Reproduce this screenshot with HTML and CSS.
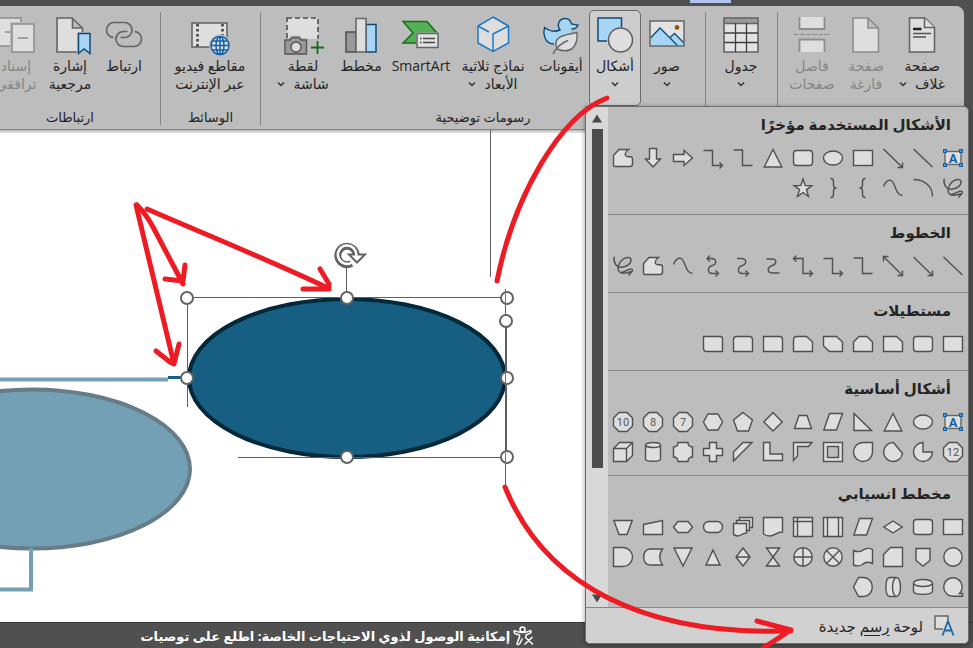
FILE: index.html
```html
<!DOCTYPE html>
<html lang="ar" dir="rtl">
<head>
<meta charset="utf-8">
<title>إدراج أشكال</title>
<link rel="stylesheet" href="styles.css">
</head>
<body>
<svg class="defs" aria-hidden="true">
  <symbol id="chev" viewBox="0 0 8 6"><path d="M1 1.5L4 4.5L7 1.5" fill="none" stroke="#333" stroke-width="1.5"/></symbol>
  <symbol id="textbox" viewBox="0 0 22 22"><rect x="3" y="4.5" width="16" height="13" stroke="#666"/><g fill="#4d9ad6" stroke="#0f5fa8" stroke-width="1"><rect x="1.5" y="2.5" width="3" height="3"/><rect x="17.500" y="2.500" width="3" height="3"/><rect x="1.5" y="16.500" width="3" height="3"/><rect x="17.500" y="16.500" width="3" height="3"/></g><text x="11" y="15.500" class="tb-letter">A</text></symbol>
  <symbol id="line" viewBox="0 0 22 22"><path d="M1.500 2L20.500 20"/></symbol>
  <symbol id="arrow" viewBox="0 0 22 22"><path fill="none" d="M1.500 2L20 20M20.500 15.500V20.500H15.500"/></symbol>
  <symbol id="arrow2" viewBox="0 0 22 22"><path fill="none" d="M2 2L20 20M20.500 15.500V20.500H15.500M1.500 6.500V1.500H6.500"/></symbol>
  <symbol id="rect" viewBox="0 0 22 22"><rect x="1.500" y="3.500" width="19" height="15"/></symbol>
  <symbol id="rrect" viewBox="0 0 22 22"><rect x="1.500" y="3.500" width="19" height="15" rx="3"/></symbol>
  <symbol id="ellipse" viewBox="0 0 22 22"><ellipse cx="11" cy="11" rx="9.500" ry="7"/></symbol>
  <symbol id="tri" viewBox="0 0 22 22"><path d="M11 2.500L19.800 20H2.200Z"/></symbol>
  <symbol id="elbow" viewBox="0 0 22 22"><path fill="none" d="M1.500 3H10.500V18.500H20.500"/></symbol>
  <symbol id="elbow1" viewBox="0 0 22 22"><path fill="none" d="M1.500 3.500H10.500V18.500H20M17.500 15.500L20.500 18.500L17.500 21.500"/></symbol>
  <symbol id="elbow2" viewBox="0 0 22 22"><path fill="none" d="M2 3.500H11V18.500H20M17.500 15.500L20.500 18.500L17.500 21.500M4.500 .5L1.500 3.500L4.500 6.500"/></symbol>
  <symbol id="curve" viewBox="0 0 22 22"><path fill="none" d="M4.500 4H10C15.500 4 14.500 9 10.500 10.500C4.500 12 5 18 10.500 18H17.500"/></symbol>
  <symbol id="curve1" viewBox="0 0 22 22"><path fill="none" d="M5 3.500H9C15 3.500 15 9 10.500 10.500C5 12 5 18.500 10.500 18.500H15M13.500 15.500L16.500 18.500L13.500 21.500"/></symbol>
  <symbol id="curve2" viewBox="0 0 22 22"><path fill="none" d="M6 3.500H9C15 3.500 15 9 10.500 10.500C5 12 5 18.500 10.500 18.500H15M13.500 15.500L16.500 18.500L13.500 21.500M8 .5L5 3.500L8 6.500"/></symbol>
  <symbol id="wave" viewBox="0 0 22 22"><path fill="none" d="M1.500 9.500C4.500 2 9.500 .5 12.500 8.500C15 15 16.500 18.500 20.500 18.500"/></symbol>
  <symbol id="freeform" viewBox="0 0 22 22"><path d="M1.500 18V8.500L7 2.500H16.500C12.500 5 12 9.500 16 9.800H18.500C20 9.800 20.500 11 20.500 12.500V17C20.500 19 19.500 19.500 18 19.500H3C2 19.500 1.500 19 1.500 18Z"/></symbol>
  <symbol id="scribble" viewBox="0 0 22 22"><path fill="none" d="M2.300 1.700C1 7 4 12.500 9.700 12.300C15 12 19.500 8 19 4.500C18.500 1.500 13 2 9.500 5.500C6 9 5 15 7.500 17C10 18.500 14 15.500 17.500 14.300C20.500 13.500 21.500 15.500 19.500 17L16.500 20.500M8 17.500C11 19 14 18.500 20 16.500"/></symbol>
  <symbol id="rarrow" viewBox="0 0 22 22"><path d="M1.500 7.500H12V3.500L20.500 11L12 18.500V14.500H1.500Z"/></symbol>
  <symbol id="darrow" viewBox="0 0 22 22"><path d="M7.500 1.500H14.500V12H18.500L11 20L3.500 12H7.500Z"/></symbol>
  <symbol id="arc" viewBox="0 0 22 22"><path fill="none" d="M1.500 2.500C12 2.500 20.500 9 20.500 19.500"/></symbol>
  <symbol id="lbrace" viewBox="0 0 22 22"><path fill="none" d="M13.500 1.500C11 1.500 10.500 3 10.500 5V8C10.500 10 9.500 11 7.500 11C9.500 11 10.500 12 10.500 14V17C10.500 19.500 11 20.500 13.500 20.500"/></symbol>
  <symbol id="rbrace" viewBox="0 0 22 22"><path fill="none" d="M8.500 1.500C11 1.500 11.500 3 11.500 5V8C11.500 10 12.500 11 14.500 11C12.500 11 11.500 12 11.500 14V17C11.500 19.500 11 20.500 8.500 20.500"/></symbol>
  <symbol id="star" viewBox="0 0 22 22"><path d="M11 2L13.200 8.600H19.800L14.500 12.600L16.500 19.500L11 15.500L5.500 19.500L7.500 12.600L2.200 8.600H8.800Z"/></symbol>
  <symbol id="snip1" viewBox="0 0 22 22"><path d="M1.500 3.500H14.500L20.500 9V18.500H1.500Z"/></symbol>
  <symbol id="snip2" viewBox="0 0 22 22"><path d="M7 3.500H15L20.500 9V18.500H1.500V9Z"/></symbol>
  <symbol id="snipd" viewBox="0 0 22 22"><path d="M1.500 3.500H14.500L20.500 9V18.500H7.500L1.500 13Z"/></symbol>
  <symbol id="snipr" viewBox="0 0 22 22"><path d="M5 3.500H14.500L20.500 9V18.500H1.500V7Q1.500 3.500 5 3.500Z"/></symbol>
  <symbol id="round1" viewBox="0 0 22 22"><path d="M1.500 3.500H17.500Q20.500 3.500 20.500 6.500V18.500H1.500Z"/></symbol>
  <symbol id="round2" viewBox="0 0 22 22"><path d="M5 3.500H17Q20.500 3.500 20.500 7V18.500H1.500V7Q1.500 3.500 5 3.500Z"/></symbol>
  <symbol id="roundd" viewBox="0 0 22 22"><path d="M4 3.500H18Q20.500 3.500 20.500 6V18.500H4.500Q1.500 18.500 1.500 15.500V3.500Z"/></symbol>
  <symbol id="rtri" viewBox="0 0 22 22"><path d="M2 2.500V19.500H19.500Z"/></symbol>
  <symbol id="para" viewBox="0 0 22 22"><path d="M7.500 2.500H20.500L14.500 19H1.800Z"/></symbol>
  <symbol id="trap" viewBox="0 0 22 22"><path d="M7 4.500H15L19.500 17.500H2.500Z"/></symbol>
  <symbol id="diamond" viewBox="0 0 22 22"><path d="M11 1.500L20.200 11L11 20L1.800 11Z"/></symbol>
  <symbol id="penta" viewBox="0 0 22 22"><path d="M11 1.500L20.500 9L16.500 20H5.500L1.500 9Z"/></symbol>
  <symbol id="hexa" viewBox="0 0 22 22"><path d="M6 3H16L20.500 11L16 19H6L1.500 11Z"/></symbol>
  <symbol id="octa" viewBox="0 0 22 22"><path d="M7 1.500H15L20.500 7V15L15 20.500H7L1.500 15V7Z"/></symbol>
  <symbol id="pie" viewBox="0 0 22 22"><path d="M11 1.500V11H20.500A9.500 9.500 0 1 1 11 1.500Z"/></symbol>
  <symbol id="chord" viewBox="0 0 22 22"><path d="M11.500 1.500L20.500 12.500A9.500 9.500 0 1 1 11.500 1.500Z"/></symbol>
  <symbol id="tear" viewBox="0 0 22 22"><path d="M11 1.500H20.500V11A9.500 9.500 0 1 1 11 1.500Z"/></symbol>
  <symbol id="frame" viewBox="0 0 22 22"><rect x="1.500" y="1.500" width="19" height="19"/><rect x="5.500" y="5.500" width="11" height="11" fill="#bdbdbd"/></symbol>
  <symbol id="half" viewBox="0 0 22 22"><path d="M1.500 1.500H20L16.500 5.500H5.500V15L1.500 19.500Z"/></symbol>
  <symbol id="lshape" viewBox="0 0 22 22"><path d="M1.500 1.500H8V13H20.500V19.500H1.500Z"/></symbol>
  <symbol id="stripe" viewBox="0 0 22 22"><path d="M11 1.500H20L1.500 20V11Z"/></symbol>
  <symbol id="cross" viewBox="0 0 22 22"><path d="M7.500 1.500H14.500V7.500H20.500V14.500H14.500V20.500H7.500V14.500H1.500V7.500H7.500Z"/></symbol>
  <symbol id="plaque" viewBox="0 0 22 22"><path d="M6 1.500H16Q16 6 20.500 6V16Q16 16 16 20.500H6Q6 16 1.500 16V6Q6 6 6 1.500Z"/></symbol>
  <symbol id="can" viewBox="0 0 22 22"><path d="M3.500 4V18C3.500 21 18.500 21 18.500 18V4"/><ellipse cx="11" cy="4" rx="7.500" ry="2.500"/></symbol>
  <symbol id="cube" viewBox="0 0 22 22"><path d="M1.500 7.500L7.500 1.500H20.500V14.500L14.500 20.500H1.500ZM1.500 7.500H14.500V20.500M14.500 7.500L20.500 1.500"/></symbol>
  <symbol id="decision" viewBox="0 0 22 22"><path d="M11 5L20.200 11L11 17L1.800 11Z"/></symbol>
  <symbol id="predef" viewBox="0 0 22 22"><path d="M1.500 1.500H20.500V20.500H1.500ZM5.500 1.500V20.500M16.500 1.500V20.500"/></symbol>
  <symbol id="internal" viewBox="0 0 22 22"><path d="M1.500 1.500H20.500V20.500H1.500ZM5.500 1.500V20.500M1.500 5.500H20.500"/></symbol>
  <symbol id="doc" viewBox="0 0 22 22"><path d="M1.500 1.500H20.500V16C14 16 13 20 8 20Q4 20 1.500 18Z"/></symbol>
  <symbol id="docs" viewBox="0 0 22 22"><path d="M7.500 1.500H20.500V11.500H7.500Z"/><path d="M4.500 4.500H17.500V14.500H4.500Z"/><path d="M1.500 7.500H14.500V17C10 17 9.500 20 5 20L1.500 18.500Z"/></symbol>
  <symbol id="term" viewBox="0 0 22 22"><rect x="1.500" y="5.500" width="19" height="11" rx="5.500"/></symbol>
  <symbol id="prep" viewBox="0 0 22 22"><path d="M6 5.500H16L20.500 11L16 16.500H6L1.500 11Z"/></symbol>
  <symbol id="minput" viewBox="0 0 22 22"><path d="M1.500 8.500L20.500 4.500V18.500H1.500Z"/></symbol>
  <symbol id="mop" viewBox="0 0 22 22"><path d="M1.800 4.500H20.200L15 18.500H7Z"/></symbol>
  <symbol id="circle" viewBox="0 0 22 22"><circle cx="11" cy="11" r="9.200"/></symbol>
  <symbol id="offpage" viewBox="0 0 22 22"><path d="M4 2.500H18V14.500L11 20L4 14.500Z"/></symbol>
  <symbol id="card" viewBox="0 0 22 22"><path d="M8.500 1.500H20.500V20.500H1.500V8.500Z"/></symbol>
  <symbol id="tape" viewBox="0 0 22 22"><path d="M1.500 4.500C6 6.500 9 6 12 3.500C15 2 18 2 20.500 3.500V17.500C16 15.500 13 16 10.500 18.500C7 20.500 4 20 1.500 19Z"/></symbol>
  <symbol id="sum" viewBox="0 0 22 22"><circle cx="11" cy="11" r="9.200"/><path d="M4.500 4.500L17.500 17.500M17.500 4.500L4.500 17.500"/></symbol>
  <symbol id="or" viewBox="0 0 22 22"><circle cx="11" cy="11" r="9.200"/><path d="M11 2V20M2 11H20"/></symbol>
  <symbol id="collate" viewBox="0 0 22 22"><path d="M4.500 2H17.500L4.500 20H17.500Z"/></symbol>
  <symbol id="sort" viewBox="0 0 22 22"><path d="M11 2L18 11L11 20L4 11ZM4 11H18"/></symbol>
  <symbol id="extract" viewBox="0 0 22 22"><path d="M11 4L18 19H4Z"/></symbol>
  <symbol id="merge" viewBox="0 0 22 22"><path d="M2 2H20L11 20Z"/></symbol>
  <symbol id="stored" viewBox="0 0 22 22"><path d="M8 3H20.500Q15 11 20.500 19H8C-.5 19-.5 3 8 3Z"/></symbol>
  <symbol id="delay" viewBox="0 0 22 22"><path d="M1.500 1.500H11A9.500 9.500 0 0 1 11 20.500H1.500Z"/></symbol>
  <symbol id="seq" viewBox="0 0 22 22"><path d="M11 20.200A9.200 9.200 0 1 1 17.500 17.500H20.500V20.200Z"/></symbol>
  <symbol id="disk" viewBox="0 0 22 22"><path d="M1.500 7V15C1.500 19.500 20.500 19.500 20.500 15V7"/><ellipse cx="11" cy="7" rx="9.500" ry="3.500"/></symbol>
  <symbol id="direct" viewBox="0 0 22 22"><path d="M14 1.500H8C2.500 1.500 2.500 20.500 8 20.500H14"/><ellipse cx="14.500" cy="11" rx="4" ry="9.500"/></symbol>
  <symbol id="display" viewBox="0 0 22 22"><path d="M6.500 1.500H12C23 2.500 23 19.500 12 20.500H6.500L1.500 11Z"/></symbol>
</svg>

<div class="app">
  <header class="titlebar"><span class="tab-mark"></span></header>

  <nav class="ribbon" aria-label="إدراج">
    <section class="group pages">
      <div class="tools">
        <button class="tool w60"><svg class="icon" viewBox="0 0 36 36"><path d="M5.500 1H21L30.500 10.500V35H5.500Z" fill="#dedede" stroke="#636363" stroke-width="1.600"/><path d="M20.500 1V10.500H30.500" fill="#dedede" stroke="#636363" stroke-width="1.600"/><path d="M9 12H17.500" stroke="#222" stroke-width="2.500"/><path d="M9 16.500H27M9 20H22" stroke="#555" stroke-width="1.500"/></svg><span>صفحة</span><span class="with-chev">غلاف <svg class="chev"><use href="#chev"/></svg></span></button>
        <button class="tool w52" disabled><svg class="icon" viewBox="0 0 36 36"><path d="M5 1H20L30.500 11V35H5ZM20 1V11H30.500" fill="#dedede" stroke="#8d8d8d" stroke-width="1.600"/></svg><span>صفحة</span><span>فارغة</span></button>
        <button class="tool w56" disabled><svg class="icon" viewBox="0 0 36 36"><path d="M5.500 0V12H30.500V0M5.500 35V22.500H30.500V35" fill="#dedede" stroke="#8d8d8d" stroke-width="1.800"/><path d="M0 17.500H36" stroke="#8d8d8d" stroke-dasharray="5 1"/></svg><span>فاصل</span><span>صفحات</span></button>
      </div>
    </section>

    <section class="group table-group">
      <div class="tools">
        <button class="tool w52"><svg class="icon" viewBox="0 0 36 36"><rect x="1" y="1" width="34" height="34" fill="#e2e2e2"/><rect x="1" y="1" width="34" height="5" fill="#999"/><path d="M1 1H35V35H1ZM1 6.500H35" fill="none" stroke="#636363" stroke-width="1.600"/><path d="M12.500 6V35M23.500 6V35M1 16H35M1 25.500H35" stroke="#3e3e3e" stroke-width="1.300"/></svg><span>جدول</span><svg class="chev"><use href="#chev"/></svg></button>
      </div>
    </section>

    <section class="group art">
      <div class="tools">
        <button class="tool w52"><svg class="icon" viewBox="0 0 36 36"><rect x="1" y="4" width="34" height="25" fill="#e2e2e2"/><path d="M1.500 21L11 11L28 28.500H1.500Z" fill="#a9d5f5"/><path d="M20.500 21L25.500 16.500L34.500 25.500V28.500H28Z" fill="#a9d5f5"/><path d="M1.500 21L11 11L28.500 28.500M20.500 21L25.500 16.500L34.500 25.500" fill="none" stroke="#0d4a75" stroke-width="1.300"/><rect x="1" y="4" width="34" height="25" fill="none" stroke="#666" stroke-width="1.500"/><circle cx="28" cy="10.500" r="2.400" fill="#9a5500"/></svg><span>صور</span><svg class="chev"><use href="#chev"/></svg></button>
        <button class="tool w52 open" aria-expanded="true"><svg class="icon" viewBox="0 0 36 36"><path d="M1 1H24.500V12A12 12 0 0 0 10 24H1Z" fill="#a9d5f5"/><path d="M10 24H1V1H24.500V10" fill="none" stroke="#0d4a75" stroke-width="1.500"/><circle cx="23.500" cy="23" r="12" fill="#dedede" stroke="#5c5c5c" stroke-width="1.500"/></svg><span>أشكال</span><svg class="chev"><use href="#chev"/></svg></button>
        <button class="tool w56"><svg class="icon" viewBox="0 0 36 36"><path d="M9 27C1 26 0 16 2 10.500C6 14 12 15 18 12C13 7 17 1 22.500 1.500Q27 1.500 28.500 7L35 8C34 11 31 11.500 28.500 12L27 17C20 17 14 19 13 27Z" fill="#a9d5f5"/><path d="M11 27C1 27 0 16 1.500 10.500C6 14 12 15 17 13C13 7 17 1 22.500 1.500Q27 1.500 28.500 7L35 8C34 11 31 12 28.500 12" fill="none" stroke="#0d4a75" stroke-width="1.400"/><path d="M14 32C9 20 20 18 34 15.500C35 28 29 38 14 32Z" fill="#dedede" stroke="#666" stroke-width="1.400"/><path d="M10 37C13 31 18 26 25 23.500" fill="none" stroke="#666" stroke-width="1.400"/></svg><span>أيقونات</span></button>
        <button class="tool w80"><svg class="icon" viewBox="0 0 36 36"><path d="M18 0L33.500 9V26L18 34.500L3 26V9Z" fill="#dedede"/><path d="M18 0L33.500 9V26L18 34.500L3 26V9ZM18 34V17L33.500 9M3 9L14 15" fill="none" stroke="#1c79c7" stroke-width="1.500"/></svg><span>نماذج ثلاثية</span><span class="with-chev">الأبعاد <svg class="chev"><use href="#chev"/></svg></span></button>
        <button class="tool w64"><svg class="icon" viewBox="0 0 36 36"><path d="M0 4.500H24L34 16L24 26H0L10 16Z" fill="#54af57" stroke="#176d1b" stroke-width="1.500"/><rect x="13" y="15.500" width="23" height="16" fill="#bdbdbd"/><rect x="14" y="16.500" width="21" height="14" fill="#e2e2e2" stroke="#666" stroke-width="1.500"/><path d="M20 21.500H32M20 25.500H32M17 21.500H18.500M17 25.500H18.500" stroke="#444" stroke-width="1.300"/></svg><span>SmartArt</span></button>
        <button class="tool w56"><svg class="icon" viewBox="0 0 36 36"><g stroke-width="1.500"><path d="M3 15H13V35H3Z" fill="#999" stroke="#4f4f4f"/><path d="M23 7.500H33V35H23Z" fill="#a9d5f5" stroke="#0d4a75"/><path d="M13 1.500H23V35H13Z" fill="#dedede" stroke="#636363"/></g></svg><span>مخطط</span></button>
        <button class="tool w60"><svg class="icon icon-wide" viewBox="0 0 42 36"><path d="M5 1H36V28H5Z" fill="#dedede" stroke="#4f4f4f" stroke-width="1.600" stroke-dasharray="5 3"/><rect x="21" y="22" width="20" height="14" fill="#bdbdbd"/><path d="M3 23H8L10 20.500H17L19 23H24.500V37H3Z" fill="#999" stroke="#bdbdbd" stroke-width="4"/><path d="M3 23H8L10 20.500H17L19 23H24.500V37H3Z" fill="#999" stroke="#555" stroke-width="1.400"/><circle cx="14" cy="30" r="5" fill="#dedede" stroke="#555" stroke-width="1.400"/><path d="M35.500 24V37M29 30.500H42" stroke="#176d1b" stroke-width="1.800"/></svg><span>لقطة</span><span class="with-chev">شاشة <svg class="chev"><use href="#chev"/></svg></span></button>
      </div>
      <h2 class="caption">رسومات توضيحية</h2>
    </section>

    <section class="group media">
      <div class="tools">
        <button class="tool w76"><svg class="icon icon-wide" viewBox="0 0 42 36"><rect x="3" y="6" width="35" height="24" fill="#dedede" stroke="#666" stroke-width="1.600"/><path d="M8.500 7V30M33.500 7V18" stroke="#444" stroke-width="2.600" stroke-dasharray="2.500 2.500"/><circle cx="31" cy="28.500" r="11" fill="#bdbdbd"/><g fill="none" stroke="#1062a8" stroke-width="1.500"><circle cx="31" cy="28.500" r="9" fill="#dedede"/><ellipse cx="31" cy="28.500" rx="4" ry="9"/><path d="M22 28.500H40M23.500 24H38.500M23.500 33H38.500M31 19.500V37.500"/></g></svg><span>مقاطع فيديو</span><span>عبر الإنترنت</span></button>
      </div>
      <h2 class="caption">الوسائط</h2>
    </section>

    <section class="group links">
      <div class="tools">
        <button class="tool w52"><svg class="icon" viewBox="0 0 36 36"><g fill="none" stroke="#666" stroke-width="1.700"><path d="M7.500 20.500A7.500 7.500 0 0 1 8.500 5.500H18.500A7.500 7.500 0 0 1 18.500 20.500H14.500"/><path d="M28.500 14.500A7.500 7.500 0 0 1 27.500 29.500H17.500A7.500 7.500 0 0 1 17.500 14.500H21.500"/></g></svg><span>ارتباط</span></button>
        <button class="tool w56"><svg class="icon" viewBox="0 0 36 36"><path d="M5 1H20L30.500 11V35H5ZM20.500 1V11H30.500" fill="#dedede" stroke="#636363" stroke-width="1.600"/><path d="M25 15H39V37H25Z" fill="#bdbdbd"/><path d="M26.500 16.500H38V36.500L32 32L26.500 36.500Z" fill="#a9d5f5" stroke="#0d4a75" stroke-width="1.500"/></svg><span>إشارة</span><span>مرجعية</span></button>
        <button class="tool w52" disabled><svg class="icon" viewBox="0 0 36 36"><path d="M0 1H23V29H0ZM7 15H13" fill="#dedede" stroke="#8d8d8d" stroke-width="1.500"/><rect x="12" y="5" width="26" height="32" fill="#bdbdbd"/><path d="M14 7H36V35H14ZM19.500 21H30" fill="#dedede" stroke="#8d8d8d" stroke-width="1.500"/></svg><span>إسناد</span><span>ترافقي</span></button>
      </div>
      <h2 class="caption">ارتباطات</h2>
    </section>
  </nav>

  <main class="workspace">
    <svg class="diagram" aria-label="مخطط">
      <g transform="translate(0 -130)">
        <ellipse cx="32" cy="469" rx="158" ry="79.500" fill="#73a0b5" stroke="#667c87" stroke-width="4"/>
        <path d="M31 548V589.500H0M0 379.500H168" fill="none" stroke="#73a0b5" stroke-width="4"/>
        <path d="M168 377.500H188" stroke="#165f82" stroke-width="3"/>
        <ellipse cx="347" cy="378" rx="158" ry="79" fill="#165f82" stroke="#03283a" stroke-width="4"/>
        <g stroke="#5e5e5e" fill="none"><path d="M187 297.500H507M187.500 297V407M238 457.500H507M490.500 130V277M346.500 267V297M505.500 289V487"/><path d="M506 320V458" stroke-width="2"/></g>
        <g fill="#fff" stroke="#636363" stroke-width="2"><circle cx="187" cy="298" r="6"/><circle cx="347" cy="298" r="6"/><circle cx="507" cy="298" r="6"/><circle cx="506" cy="321" r="6"/><circle cx="187" cy="378" r="6"/><circle cx="507" cy="378" r="6"/><circle cx="347" cy="457" r="6"/><circle cx="507" cy="457" r="6"/></g>
        <path d="M505.500 291V305M505.500 371V385M505.500 450V464" stroke="#777"/>
        <path d="M356.200 255.300A9.200 9.200 0 1 0 351.500 263.500" fill="none" stroke="#636363" stroke-width="7"/>
        <path d="M349 254.500H365L357 262.500Z" fill="#fff" stroke="#636363" stroke-width="2"/>
        <path d="M356.200 256A9.200 9.200 0 1 0 352 262.500" fill="none" stroke="#fff" stroke-width="2.500"/>
      </g>
    </svg>
  </main>

  <footer class="statusbar">
    <button class="status"><svg class="access" viewBox="0 0 22 20"><g fill="none" stroke="#fff" stroke-width="1.500"><circle cx="9.500" cy="3.500" r="2.500"/><path d="M2 4.500C5 7 14 7 17 4.500Q19 5 17.500 7L13 9V11M2 4.500Q0 5.500 2 7.500L6.500 9V11L4 17.500Q4.500 19.500 6.500 18L9.500 12.500M12 11L20 18.500M19.500 11L11.500 18.500"/></g></svg><span>إمكانية الوصول لذوي الاحتياجات الخاصة: اطلع على توصيات</span></button>
  </footer>
</div>

<div class="menu">
  <div class="menu-body">
    <div class="gallery">
      <section class="shapes">
        <h3>الأشكال المستخدمة مؤخرًا</h3>
        <div class="cells">
          <button><svg><use href="#textbox"/></svg></button><button><svg><use href="#line"/></svg></button><button><svg><use href="#arrow"/></svg></button><button><svg><use href="#rect"/></svg></button><button><svg><use href="#ellipse"/></svg></button><button><svg><use href="#rrect"/></svg></button><button><svg><use href="#tri"/></svg></button><button><svg><use href="#elbow"/></svg></button><button><svg><use href="#elbow1"/></svg></button><button><svg><use href="#rarrow"/></svg></button><button><svg><use href="#darrow"/></svg></button><button><svg><use href="#freeform"/></svg></button>
          <button><svg><use href="#scribble"/></svg></button><button><svg><use href="#arc"/></svg></button><button><svg><use href="#wave"/></svg></button><button><svg><use href="#lbrace"/></svg></button><button><svg><use href="#rbrace"/></svg></button><button><svg><use href="#star"/></svg></button>
        </div>
      </section>
      <section class="shapes">
        <h3>الخطوط</h3>
        <div class="cells">
          <button><svg><use href="#line"/></svg></button><button><svg><use href="#arrow"/></svg></button><button><svg><use href="#arrow2"/></svg></button><button><svg><use href="#elbow"/></svg></button><button><svg><use href="#elbow1"/></svg></button><button><svg><use href="#elbow2"/></svg></button><button><svg><use href="#curve"/></svg></button><button><svg><use href="#curve1"/></svg></button><button><svg><use href="#curve2"/></svg></button><button><svg><use href="#wave"/></svg></button><button><svg><use href="#freeform"/></svg></button><button><svg><use href="#scribble"/></svg></button>
        </div>
      </section>
      <section class="shapes">
        <h3>مستطيلات</h3>
        <div class="cells">
          <button><svg><use href="#rect"/></svg></button><button><svg><use href="#rrect"/></svg></button><button><svg><use href="#snip1"/></svg></button><button><svg><use href="#snip2"/></svg></button><button><svg><use href="#snipd"/></svg></button><button><svg><use href="#snipr"/></svg></button><button><svg><use href="#round1"/></svg></button><button><svg><use href="#round2"/></svg></button><button><svg><use href="#roundd"/></svg></button>
        </div>
      </section>
      <section class="shapes tight">
        <h3>أشكال أساسية</h3>
        <div class="cells">
          <button><svg><use href="#textbox"/></svg></button><button><svg><use href="#ellipse"/></svg></button><button><svg><use href="#tri"/></svg></button><button><svg><use href="#rtri"/></svg></button><button><svg><use href="#para"/></svg></button><button><svg><use href="#trap"/></svg></button><button><svg><use href="#diamond"/></svg></button><button><svg><use href="#penta"/></svg></button><button><svg><use href="#hexa"/></svg></button><button><svg><use href="#octa"/><text class="num" x="11" y="15">7</text></svg></button><button><svg><use href="#octa"/><text class="num" x="11" y="15">8</text></svg></button><button><svg><use href="#octa"/><text class="num" x="11" y="15">10</text></svg></button>
          <button><svg><use href="#octa"/><text class="num" x="11" y="15">12</text></svg></button><button><svg><use href="#pie"/></svg></button><button><svg><use href="#chord"/></svg></button><button><svg><use href="#tear"/></svg></button><button><svg><use href="#frame"/></svg></button><button><svg><use href="#half"/></svg></button><button><svg><use href="#lshape"/></svg></button><button><svg><use href="#stripe"/></svg></button><button><svg><use href="#cross"/></svg></button><button><svg><use href="#plaque"/></svg></button><button><svg><use href="#can"/></svg></button><button><svg><use href="#cube"/></svg></button>
        </div>
      </section>
      <section class="shapes last">
        <h3>مخطط انسيابي</h3>
        <div class="cells">
          <button><svg><use href="#rect"/></svg></button><button><svg><use href="#rrect"/></svg></button><button><svg><use href="#decision"/></svg></button><button><svg><use href="#para"/></svg></button><button><svg><use href="#predef"/></svg></button><button><svg><use href="#internal"/></svg></button><button><svg><use href="#doc"/></svg></button><button><svg><use href="#docs"/></svg></button><button><svg><use href="#term"/></svg></button><button><svg><use href="#prep"/></svg></button><button><svg><use href="#minput"/></svg></button><button><svg><use href="#mop"/></svg></button>
          <button><svg><use href="#circle"/></svg></button><button><svg><use href="#offpage"/></svg></button><button><svg><use href="#card"/></svg></button><button><svg><use href="#tape"/></svg></button><button><svg><use href="#sum"/></svg></button><button><svg><use href="#or"/></svg></button><button><svg><use href="#collate"/></svg></button><button><svg><use href="#sort"/></svg></button><button><svg><use href="#extract"/></svg></button><button><svg><use href="#merge"/></svg></button><button><svg><use href="#stored"/></svg></button><button><svg><use href="#delay"/></svg></button>
          <button><svg><use href="#seq"/></svg></button><button><svg><use href="#disk"/></svg></button><button><svg><use href="#direct"/></svg></button><button><svg><use href="#display"/></svg></button>
        </div>
      </section>
    </div>
    <div class="scroll" aria-hidden="true">
      <svg class="scroll-arrow" viewBox="0 0 12 10"><path d="M6 .5L11 8.500H1Z" fill="#484848"/></svg>
      <div class="track"><div class="thumb"></div></div>
      <svg class="scroll-arrow" viewBox="0 0 12 10"><path d="M6 9.500L11 1.500H1Z" fill="#484848"/></svg>
    </div>
  </div>
  <button class="new-canvas"><svg class="canvas-icon" viewBox="0 0 20 22"><path d="M14 5V1H1V14H9" fill="#dedede" stroke="#666" stroke-width="1.500"/><path d="M8.500 20.500L14 6L19.500 20.500M10.500 15.500H17.500" fill="none" stroke="#1a69a8" stroke-width="1.800"/></svg><span>لوحة <u>رسم</u> جديدة</span></button>
</div>

<svg class="ink" aria-hidden="true">
  <g fill="none" stroke="#ed1c24" stroke-width="5" stroke-linecap="round" stroke-linejoin="round">
    <path d="M136 205L174 364M156 351L170 362L174 364L179 344"/>
    <path d="M137 205Q146 214 153 227L183 284M165 279L183 281L185 265"/>
    <path d="M147 209C195 230 260 256 328 288M303 289H329V284L320 269"/>
    <path d="M607 98C560 116 514 196 497 281"/>
    <path d="M505 487C545 586 645 636 791 631M757 621L791 630L763 648"/>
  </g>
</svg>
</body>
</html>
```
FILE: styles.css
```css
* { box-sizing: border-box; }

html, body { height: 100%; }

body {
  margin: 0;
  position: relative;
  overflow: hidden;
  background: #505050;
  color: #242424;
  font: 14px/18px "Open Sans", "Noto Sans", "DejaVu Sans", sans-serif;
}

button {
  margin: 0;
  padding: 0;
  border: 0;
  background: none;
  color: inherit;
  font: inherit;
}

svg { display: block; overflow: visible; }

.defs { position: absolute; width: 0; height: 0; }

.app {
  display: flex;
  flex-direction: column;
  height: 100%;
}

.titlebar {
  display: flex;
  height: 6px;
  padding-right: 242px;
}

.tab-mark {
  width: 41px;
  height: 3px;
  background: #b2c3ee;
}

.ribbon {
  display: flex;
  z-index: 1;
  height: 124px;
  margin-right: 9px;
  padding: 4px 0;
  overflow: hidden;
  background: #bdbdbd;
  border-bottom: 1px solid #858585;
  border-top-right-radius: 8px;
}

.group {
  display: flex;
  flex: none;
  flex-direction: column;
  justify-content: space-between;
  padding: 0 12px;
  border-left: 1px solid #858585;
  margin-top: 2px;
}

.tools { display: flex; margin-top: -2px; }

.pages { width: 187px; }
.table-group { width: 72px; padding: 0 10px; }
.art { width: 445px; }
.media { width: 100px; }
.links { border-left: 0; padding: 0 10px; }

.tool {
  display: flex;
  flex: none;
  flex-direction: column;
  align-items: center;
  height: 96px;
  padding-top: 6px;
  border: 1px solid transparent;
  border-radius: 5px;
  white-space: nowrap;
}

.tool:disabled { color: #868686; }

.tool.open {
  background: #cdcdcd;
  border-color: #6a6a6a;
}

.w52 { width: 52px; }
.w56 { width: 56px; }
.w60 { width: 60px; }
.w64 { width: 64px; }
.w76 { width: 76px; }
.w80 { width: 80px; }

.icon {
  width: 36px;
  height: 36px;
  margin-bottom: 4px;
}

.icon-wide { width: 42px; }

.chev {
  width: 8px;
  height: 6px;
  margin: 6px 0;
}

.with-chev {
  display: flex;
  align-items: center;
  gap: 8px;
}

.caption {
  margin: 0;
  font-size: 13px;
  line-height: 16px;
  font-weight: 400;
  text-align: center;
  white-space: nowrap;
}

.workspace {
  flex: 1;
  min-height: 0;
  margin-right: 5px;
  background: #fff linear-gradient(#b4b4b4, #fff) no-repeat 0 0 / 100% 4px;
}

.diagram { width: 100%; height: 100%; }

.statusbar {
  display: flex;
  height: 26px;
  padding-right: 45%;
  background: #505050;
  border-top: 1px solid #383838;
}

.status {
  display: flex;
  align-items: center;
  gap: 3px;
  color: #fff;
  font-size: 13px;
  font-weight: 700;
  white-space: nowrap;
}

.access { width: 22px; height: 20px; }

.menu {
  position: absolute;
  z-index: 2;
  top: 106px;
  right: 4px;
  width: 384px;
  overflow: hidden;
  background: #bdbdbd;
  border: 1px solid #6e6e6e;
  border-radius: 0 5px 5px 5px;
  box-shadow: 0 1px 5px #0006;
}

.menu-body { display: flex; }

.gallery { flex: 1; }

.shapes {
  padding: 3px 0 11px;
  border-bottom: 1px solid #858585;
}

.shapes.tight { padding-bottom: 8px; }
.shapes.last { padding-bottom: 5px; border-bottom: 0; }

.shapes h3 {
  margin: 0 0 5px;
  padding-right: 17px;
  font-size: 15px;
  line-height: 28px;
  font-weight: 700;
}

.cells {
  display: grid;
  grid-template-columns: repeat(12, 1fr);
  grid-auto-rows: 30px;
}

.cells button {
  display: grid;
  place-items: center;
}

.cells svg {
  width: 22px;
  height: 22px;
  fill: #dedede;
  stroke: #505050;
  stroke-width: 1.4;
}

.tb-letter {
  fill: #1062a8;
  stroke: none;
  font: 700 13px Roboto, sans-serif;
  text-anchor: middle;
}

.num {
  fill: #555;
  stroke: none;
  font: 11px Roboto, sans-serif;
  text-anchor: middle;
}

.scroll {
  display: flex;
  flex-direction: column;
  align-items: center;
  width: 22px;
  padding: 7px 0 4px;
  background: #d8d8d8;
}

.scroll-arrow { width: 12px; height: 10px; }

.track { flex: 1; width: 11px; padding-top: 5px; }

.thumb { height: 73%; background: #4c4c4c; }

.new-canvas {
  display: flex;
  align-items: center;
  gap: 11px;
  width: 100%;
  height: 36px;
  padding-right: 14px;
  background: #d1d1d1;
  border-top: 1px solid #858585;
  font-size: 15px;
}

.new-canvas u { text-underline-offset: 3px; }

.canvas-icon { width: 20px; height: 22px; }

.ink {
  position: absolute;
  z-index: 3;
  top: 0;
  left: 0;
  width: 100%;
  height: 100%;
  pointer-events: none;
}
```
